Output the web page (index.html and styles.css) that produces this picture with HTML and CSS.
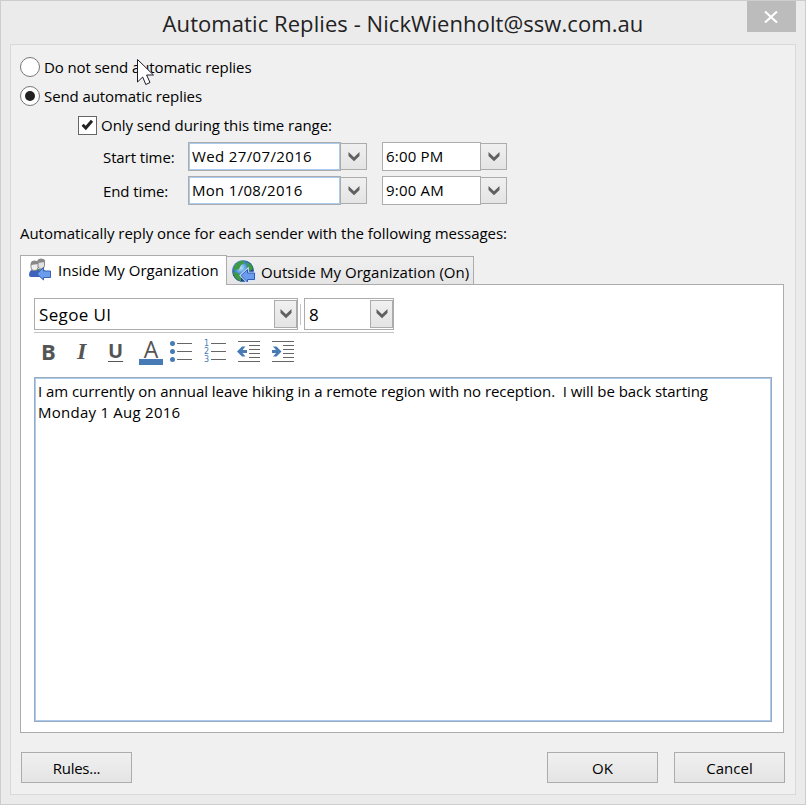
FILE: index.html
```html
<!DOCTYPE html>
<html lang="en">
<head>
<meta charset="utf-8">
<title>Automatic Replies</title>
<link rel="stylesheet" href="styles.css">
</head>
<body>
<main class="window">
  <header class="titlebar">
    <h1 class="title"><span>Automatic Replies - NickWienholt@ssw.com.au</span></h1>
    <button class="close" aria-label="Close"><svg width="14" height="12" viewBox="0 0 14 12"><path d="M1 .5 13 11.500M13 .5 1 11.500" stroke="#fff" stroke-width="2.1"/></svg></button>
  </header>
  <section class="panel">
    <label class="option"><i class="radio"></i><span class="t-off">Do not send automatic replies</span></label>
    <label class="option"><i class="radio on"></i><span class="t-on">Send automatic replies</span></label>
    <label class="option range"><i class="check"><svg width="17" height="17" viewBox="0 0 17 17"><path d="M3.600 7.800 6.800 11 13 3.800" fill="none" stroke="#222" stroke-width="3"/></svg></i><span class="t-range">Only send during this time range:</span></label>
    <div class="times">
      <span class="t-start">Start time:</span>
      <div class="picker date"><div class="value"><span class="t-d1">Wed 27/07/2016</span></div><button class="drop"><svg width="12" height="10" viewBox="0 0 12 10"><path d="M.5 0 6 5.2 11.500 0V4L6 9.300.5 4z" fill="#606060"/></svg></button></div>
      <div class="picker"><div class="value"><span class="t-h1">6:00 PM</span></div><button class="drop"><svg width="12" height="10" viewBox="0 0 12 10"><path d="M.5 0 6 5.2 11.500 0V4L6 9.300.5 4z" fill="#606060"/></svg></button></div>
      <span class="t-end">End time:</span>
      <div class="picker date"><div class="value"><span class="t-d2">Mon 1/08/2016</span></div><button class="drop"><svg width="12" height="10" viewBox="0 0 12 10"><path d="M.5 0 6 5.2 11.500 0V4L6 9.300.5 4z" fill="#606060"/></svg></button></div>
      <div class="picker"><div class="value"><span class="t-h2">9:00 AM</span></div><button class="drop"><svg width="12" height="10" viewBox="0 0 12 10"><path d="M.5 0 6 5.2 11.500 0V4L6 9.300.5 4z" fill="#606060"/></svg></button></div>
    </div>
    <p class="hint"><span class="t-hint">Automatically reply once for each sender with the following messages:</span></p>
    <nav class="tabs">
      <div class="tab active">
        <svg class="tabicon" width="24" height="24" viewBox="0 0 24 24">
          <path d="M1 17q0-5 5-6h5q4 1 5 5l-4 3H3q-2 0-2-2z" fill="#3f63bd"/>
          <path d="M10 12l3-1q4 0 5 3l-3 1z" fill="#4c9a51"/>
          <rect x="9.500" y="1" width="7" height="9.500" rx="3" fill="#e2e2e2" stroke="#888"/>
          <path d="M9.500 5V4q0-3 4-3t3.500 3z" fill="#888"/>
          <rect x="3" y="3" width="7" height="9.500" rx="3" fill="#eee" stroke="#888"/>
          <path d="M3 7V6q0-3 4-3t3.500 3z" fill="#888"/>
          <path d="M9 16 15.500 9.500v3.500H22.500v6.500H15.500V22z" fill="#6c9cec" stroke="#3a61bb"/>
        </svg>
        <span class="t-in">Inside My Organization</span>
      </div>
      <div class="tab">
        <svg class="tabicon" width="24" height="24" viewBox="0 0 24 24">
          <defs><radialGradient id="g" cx=".4" cy=".35"><stop offset="0" stop-color="#b9e4ff"/><stop offset=".6" stop-color="#4187d5"/><stop offset="1" stop-color="#174794"/></radialGradient></defs>
          <circle cx="11" cy="11" r="10.800" fill="url(#g)"/>
          <path d="M2 7Q5 1 11 .5l2 2.500-4 2-2 4-5 2zM15 2q5 2 6 7l-3 2-3-4zM1 12l5 1 3 4v4.500Q2 19 1 12z" fill="#3f9a42"/>
          <path d="M9 15.500 15.500 9.500V13h7v6.500h-7V22z" fill="#6c9cec" stroke="#d5e5ff" stroke-width="2.500"/>
          <path d="M9 15.500 15.500 9.500V13h7v6.500h-7V22z" fill="#6c9cec" stroke="#2e5db5"/>
        </svg>
        <span class="t-out">Outside My Organization (On)</span>
      </div>
    </nav>
    <div class="sheet">
      <div class="combos">
        <div class="combo font"><span class="t-font">Segoe UI</span><button class="drop"><svg width="12" height="10" viewBox="0 0 12 10"><path d="M.5 0 6 5.2 11.500 0V4L6 9.300.5 4z" fill="#606060"/></svg></button></div>
        <i class="sep"></i>
        <div class="combo size"><span>8</span><button class="drop"><svg width="12" height="10" viewBox="0 0 12 10"><path d="M.5 0 6 5.2 11.500 0V4L6 9.300.5 4z" fill="#606060"/></svg></button></div>
      </div>
      <div class="tools">
        <b class="tool bold">B</b>
        <i class="tool italic">I</i>
        <b class="tool under">U</b>
        <span class="tool color">A</span>
        <svg class="tool bullets" width="22" height="22" viewBox="0 0 22 22"><g fill="#467bb5"><circle cx="2.500" cy="2.500" r="2.500"/><circle cx="2.500" cy="10.500" r="2.500"/><circle cx="2.500" cy="18.500" r="2.500"/></g><path d="M7 2.500h15M7 10.500h15M7 18.500h15" stroke="#666"/></svg>
        <span class="tool numbers"><span class="digits"><em>1</em><em>2</em><em>3</em></span><svg width="15" height="22" viewBox="0 0 15 22"><path d="M0 2.500h15M0 10.500h15M0 18.500h15" stroke="#666"/></svg></span>
        <svg class="tool outdent" width="23" height="22" viewBox="0 0 23 22"><path d="M1 .5h22M12 4.500h11M12 8.500h11M12 12.500h11M12 16.500h11M1 20.500h22" stroke="#666"/><path d="M0 10.500 5 5.500h3.500L5.500 9H10v3H5.500l3 3.500H5z" fill="#467bb5"/></svg>
        <svg class="tool indent" width="23" height="22" viewBox="0 0 23 22"><path d="M1 .5h22M12 4.500h11M12 8.500h11M12 12.500h11M12 16.500h11M1 20.500h22" stroke="#666"/><path d="M10.500 10.500 5.500 5.500H2L5 9H1v3h4l-3 3.500h3.500z" fill="#467bb5"/></svg>
      </div>
      <div class="editor"><p class="t-m1">I am currently on annual leave hiking in a remote region with no reception.&nbsp; I will be back starting</p><p class="t-m2">Monday 1 Aug 2016</p></div>
    </div>
    <footer class="actions">
      <button class="push rules"><span class="t-rules">Rules...</span></button>
      <button class="push"><span class="t-ok">OK</span></button>
      <button class="push"><span class="t-cancel">Cancel</span></button>
    </footer>
  </section>
  <svg class="cursor" width="20" height="30" viewBox="0 0 20 30"><path d="M1.500 1.500V24l5.200-5 3.100 7.500 4.200-2L10.600 17H17.500z" fill="#fff" stroke="#1c1c28"/></svg>
</main>
</body>
</html>
```
FILE: styles.css
```css
* { box-sizing: border-box; }
body { margin: 0; font: 15px/20px "Open Sans", "Noto Sans", sans-serif; color: #000; }
h1, p { margin: 0; font-weight: 400; }
button { font: inherit; color: inherit; padding: 0; margin: 0; border: 1px solid #acacac; background: linear-gradient(#f0f0f0, #e4e4e4); }
svg { display: block; }
span { white-space: nowrap; }
.window { position: relative; width: 806px; height: 805px; border: 1px solid #cdcdcd; background: #ebebeb; padding: 0 9px; }
.titlebar { height: 43px; display: flex; position: relative; }
.title { flex: 1; text-align: center; font-size: 22px; line-height: 44px; letter-spacing: .07px; color: #222; }
.close { position: absolute; right: 0; top: 0; width: 49px; height: 31px; border: 0; background: #bcbcbc; display: grid; place-items: center; padding-right: 2px; }
.panel { height: 751px; border: 1px solid #d9d9d9; background: #f0f0f0; padding: 12px 9px 0; }
.option { display: flex; align-items: center; height: 20px; gap: 4px; margin-bottom: 9px; }
.radio { width: 20px; height: 20px; border: 1px solid #777; border-radius: 50%; background: #fff; display: grid; place-items: center; }
.radio.on::after { content: ""; width: 10px; height: 10px; border-radius: 50%; background: #222; }
.range { margin-left: 58px; margin-bottom: 7px; }
.check { width: 19px; height: 19px; border: 1px solid #666; background: #fff; }
.times { display: grid; grid-template-columns: 85px 194px 125px; row-gap: 5px; align-items: center; margin-left: 83px; }
.picker { display: flex; height: 29px; align-items: center; }
.value { width: 99px; height: 29px; border: 1px solid #acacac; border-right: 0; background: #fff; padding: 3px 3px; }
.date .value { width: 153px; border: 1px solid #acacac; box-shadow: inset 0 0 0 1px #a9cbee; }
.drop { width: 27px; height: 27px; display: grid; place-items: center; margin-left: -1px; }
.hint { height: 20px; margin-top: 18px; }
.tabs { display: flex; align-items: flex-end; height: 30px; margin-top: 12px; }
.tab { position: relative; display: flex; align-items: center; height: 29px; width: 248px; border: 1px solid #acacac; background: linear-gradient(#f0f0f0, #e5e5e5); padding: 2px 0 0 5px; gap: 5px; margin-left: -1px; }
.tab.active { height: 30px; width: 207px; margin: 0; border-bottom: 0; background: #fff; padding: 0 0 2px 7px; gap: 6px; z-index: 1; }
.sheet { width: 764px; height: 449px; margin-top: -1px; border: 1px solid #acacac; background: #fff; padding: 13px 11px 0 13px; }
.combos { display: flex; align-items: flex-start; width: 360px; height: 35px; border-bottom: 1px solid #c4c4c4; }
.combo { display: flex; align-items: center; justify-content: space-between; width: 90px; height: 32px; border: 1px solid #acacac; padding-left: 4px; font-size: 17px; }
.combo.font { width: 264px; }
.combo span { padding-top: 1px; }
.combo .drop { width: 23px; height: 28px; margin: 0; }
.sep { width: 1px; height: 21px; background: #c4c4c4; margin: 6px 3px 0 2px; }
.tools { display: flex; align-items: flex-start; height: 44px; padding-top: 8px; color: #555; }
.tool { flex: none; }
.bold, .italic, .under { width: 34px; text-align: left; font-size: 22px; line-height: 20px; }
.bold { padding-left: 7px; }
.italic { padding-left: 9px; font-family: "Liberation Serif", serif; font-weight: bold; font-size: 24px; }
.under { padding-left: 6px; font-weight: 700; text-decoration: underline; text-decoration-thickness: 1px; text-underline-offset: 3px; font-size: 20px; }
.color { width: 24px; height: 24px; margin-left: 3px; text-align: center; font-size: 23px; line-height: 17px; border-bottom: 6px solid #467bb5; }
.bullets { margin-left: 7px; }
.numbers { display: flex; width: 23px; margin-left: 12px; gap: 2px; }
.digits { width: 5px; margin-top: -1px; color: #467bb5; font: 8px/8px "DejaVu Sans", sans-serif; }
.digits em { display: block; font-style: normal; }
.outdent { margin-left: 10px; }
.indent { margin-left: 11px; }
.editor { width: 738px; height: 345px; border: 1px solid #9baabd; box-shadow: inset 0 0 0 1px #a9cbee; padding: 3px; line-height: 21px; }
.editor p { white-space: nowrap; }
.actions { display: flex; gap: 16px; margin: 19px 0 0 1px; }
.push { width: 111px; height: 31px; }
.rules { margin-right: 399px; }
.cursor { position: absolute; left: 135px; top: 57px; }
/* per-label tracking */
.t-off, .t-on, .t-start, .t-end { letter-spacing: -.1px; }
.t-range, .t-hint { letter-spacing: -.04px; }
.t-d1 { letter-spacing: .36px; }
.t-d2 { letter-spacing: .3px; }
.t-h1, .t-h2 { letter-spacing: .2px; }
.t-out { letter-spacing: .04px; }
.t-font { letter-spacing: .35px; }
.t-m1 { letter-spacing: -.05px; }
.t-m2 { letter-spacing: .25px; }
.t-rules { letter-spacing: -.25px; }
```
